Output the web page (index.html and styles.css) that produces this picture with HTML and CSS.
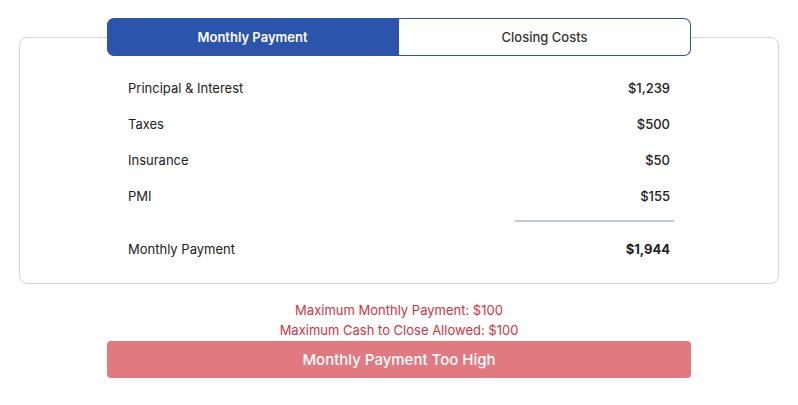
FILE: index.html
```html
<!DOCTYPE html>
<html lang="en">
<head>
    <meta charset="UTF-8">
    <meta name="viewport" content="width=device-width, initial-scale=1.0">
    <title>Payment Summary</title>
    <link rel="stylesheet" href="styles.css">
</head>
<body>
    <div class="page">
        <div class="tabs">
            <button class="tab active">Monthly Payment</button>
            <button class="tab">Closing Costs</button>
        </div>

        <div class="summary-card">
            <div class="rows">
                <div class="row"><span>Principal &amp; Interest</span><span class="amount">$1,239</span></div>
                <div class="row"><span>Taxes</span><span class="amount">$500</span></div>
                <div class="row"><span>Insurance</span><span class="amount">$50</span></div>
                <div class="row"><span>PMI</span><span class="amount">$155</span></div>
                <div class="divider"></div>
                <div class="row total"><span>Monthly Payment</span><span class="amount">$1,944</span></div>
            </div>
        </div>

        <div class="limits">
            <p>Maximum Monthly Payment: $100</p>
            <p>Maximum Cash to Close Allowed: $100</p>
        </div>
        <button class="status-btn">Monthly Payment Too High</button>
    </div>
</body>
</html>
```

FILE: styles.css
```css
body {
    font-family: 'Inter', 'Liberation Sans', sans-serif;
    color: #222;
    margin: 0;
    background: #fff;
}

.page {
    padding: 18px 19px 0;
    display: flex;
    flex-direction: column;
    align-items: center;
}

.tabs {
    width: 584px;
    display: flex;
    position: relative;
    z-index: 1;
    margin-bottom: -19px;
    background: #fff;
    border-radius: 7px;
}

.tab {
    flex: 1;
    height: 38px;
    font-family: inherit;
    font-size: 13px;
    font-weight: 500;
    color: #333;
    background: #fff;
    border: 1.5px solid #2b54ab;
    border-left: none;
    border-radius: 0 7px 7px 0;
    cursor: pointer;
}

.tab.active {
    background: #2b54ab;
    color: #fff;
    font-weight: 600;
    border-radius: 7px 0 0 7px;
}

.summary-card {
    width: 100%;
    box-sizing: border-box;
    border: 1px solid #d2d5de;
    border-radius: 8px;
    padding: 32px 104px 16px 108px;
}

.row {
    height: 36px;
    display: flex;
    align-items: center;
    justify-content: space-between;
    font-size: 13px;
    padding-right: 4px;
}

.amount {
    font-weight: 500;
}

.divider {
    width: 159px;
    height: 2px;
    background: #c5cad6;
    margin: 6px 0 9px auto;
}

.row.total .amount {
    font-weight: 700;
}

.limits {
    margin-top: 16px;
    text-align: center;
    color: #d2343f;
    font-size: 13px;
}

.limits p {
    margin: 0;
    line-height: 20px;
}

.status-btn {
    width: 584px;
    height: 37px;
    margin-top: 1px;
    background: #e07a80;
    color: #fff;
    border: none;
    border-radius: 4px;
    font-family: inherit;
    font-size: 15px;
    font-weight: 500;
}
```
